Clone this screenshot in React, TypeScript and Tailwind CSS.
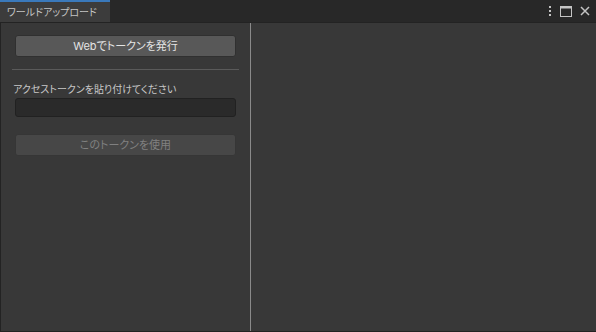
import React from "react";

const jp = "font-['Inter','Noto_Sans_CJK_JP',sans-serif] [font-feature-settings:'palt']";

function TopBar() {
    return (
        <div className="flex h-[22px] items-stretch bg-[#282828]">
            <div className="flex w-[110px] items-center border-t-2 border-[#3a79bb] bg-[#3c3c3c] pl-[7px] text-[10px] text-[#c4c4c4]">
                ワールドアップロード
            </div>
            <div className="flex-1" />
            <div className="flex items-center gap-[8px] pr-[6px] text-[#c4c4c4]">
                <svg width="4" height="12" viewBox="0 0 4 12">
                    <rect x="1" y="1" width="2" height="2" fill="currentColor" />
                    <rect x="1" y="5" width="2" height="2" fill="currentColor" />
                    <rect x="1" y="9" width="2" height="2" fill="currentColor" />
                </svg>
                <svg width="12" height="11" viewBox="0 0 12 11">
                    <rect x="0.5" y="0.5" width="11" height="10" fill="none" stroke="currentColor" />
                    <rect x="0.5" y="0.5" width="11" height="2" fill="currentColor" />
                </svg>
                <svg width="10" height="10" viewBox="0 0 10 10">
                    <path d="M1 1 L9 9 M9 1 L1 9" stroke="currentColor" strokeWidth="1.5" />
                </svg>
            </div>
        </div>
    );
}

export default function App() {
    return (
        <div className={`flex h-[332px] w-[596px] flex-col bg-[#383838] ${jp}`}>
            <TopBar />
            <div className="flex flex-1 border-t border-b border-l border-[#232323]">
                <div className="flex w-[249px] flex-col px-[14px] pt-[12px]">
                    <button className="h-[22px] rounded-[3px] border border-[#303030] bg-[#585858] text-[11px] text-[#e4e4e4]">
                        Webでトークンを発行
                    </button>
                    <div className="mx-[-3px] mt-[12px] h-px bg-[#5a5a5a]" />
                    <div className="-ml-[2px] mt-[12px] text-[10px] leading-[14px] text-[#c8c8c8]">
                        アクセストークンを貼り付けてください
                    </div>
                    <div className="mt-[2px] h-[19px] rounded-[3px] border border-[#212121] bg-[#2a2a2a]" />
                    <button className="mt-[17px] h-[22px] rounded-[3px] border border-[#363636] bg-[#474747] text-[11px] text-[#808080]">
                        このトークンを使用
                    </button>
                </div>
                <div className="w-px bg-[#8a8a8a]" />
                <div className="flex-1" />
            </div>
        </div>
    );
}
